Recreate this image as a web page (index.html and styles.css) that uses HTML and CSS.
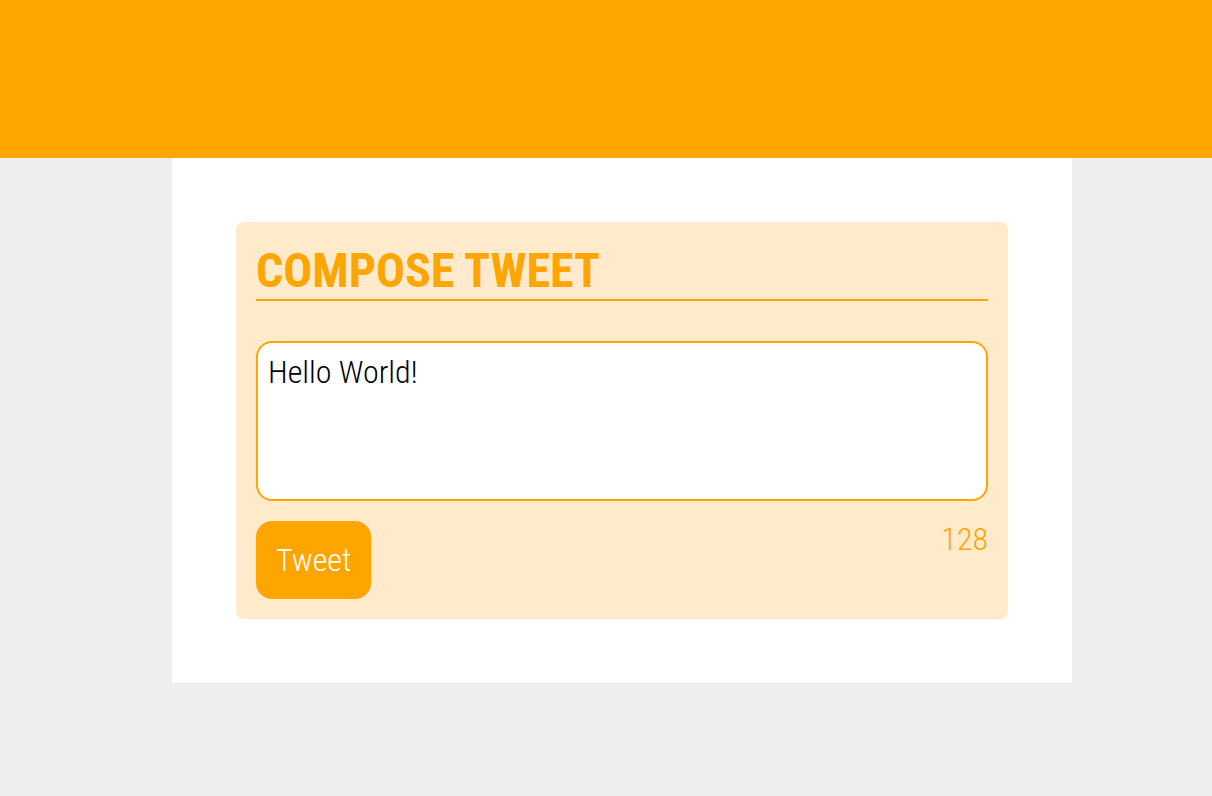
FILE: index.html
```html
<!DOCTYPE html>
<html>
<head>
<meta charset="utf-8">
<link rel="stylesheet" href="styles.css">
</head>
<body>
<header class="top"></header>
<main class="page">
  <section class="composer">
    <h2 class="title">COMPOSE TWEET</h2>
    <form class="form">
      <textarea class="input">Hello World!</textarea>
      <div class="actions">
        <button type="button" class="btn">Tweet</button>
        <output class="counter">128</output>
      </div>
    </form>
  </section>
</main>
</body>
</html>
```
FILE: styles.css
```css
html, body {
  margin: 0;
  padding: 0;
  background: #eeeeee;
  font-family: "Roboto Condensed", Roboto, "Liberation Sans", sans-serif;
  font-stretch: condensed;
}
body {
  padding-left: 32px;
}
.top {
  height: 158px;
  margin-left: -32px;
  background: #ffa500;
}
.page {
  width: 900px;
  margin: 0 auto;
  background: #fff;
  padding: 64px;
  box-sizing: border-box;
}
.composer {
  background: #ffebcc;
  border-radius: 8px;
  padding: 20px;
}
.title {
  margin: 0;
  color: #ffa500;
  font-size: 48px;
  font-weight: 700;
  line-height: 56px;
  border-bottom: 2px solid #ffa500;
  padding-top: 1px;
}
.form {
  margin-top: 40px;
}
.input {
  display: block;
  box-sizing: border-box;
  width: 100%;
  height: 160px;
  border: 2px solid #ffa500;
  border-radius: 16px;
  padding: 10px;
  font-family: inherit;
  font-stretch: condensed;
  font-size: 32px;
  font-weight: 300;
  color: #000;
  resize: none;
  outline: none;
}
.actions {
  display: flex;
  justify-content: space-between;
  align-items: flex-start;
  margin-top: 20px;
}
.btn {
  background: #ffa500;
  color: #fff;
  border: none;
  border-radius: 16px;
  height: 78px;
  padding: 0 20px;
  font-family: inherit;
  font-stretch: condensed;
  font-size: 32px;
  font-weight: 300;
}
.counter {
  color: #ffa500;
  font-size: 32px;
  font-weight: 300;
  line-height: 36px;
}
```
